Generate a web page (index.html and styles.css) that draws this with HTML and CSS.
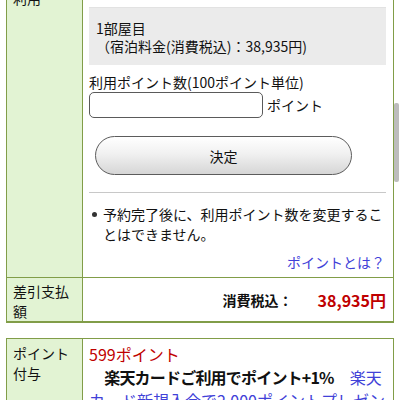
FILE: index.html
```html
<!DOCTYPE html>
<html lang="ja">
<head>
<meta charset="utf-8">
<link rel="stylesheet" href="styles.css">
</head>
<body>
<div class="page">
  <div class="tbl tbl1">
    <div class="th">ポイント利用</div>
    <div class="td use">
      <div class="room">
        <div>1部屋目</div>
        <div>（宿泊料金(消費税込)：38,935円)</div>
      </div>
      <div class="label">利用ポイント数(100ポイント単位)</div>
      <div class="inrow">
        <input class="pts" type="text">
        <span>ポイント</span>
      </div>
      <button class="btn" type="button">決定</button>
      <hr class="sep">
      <ul class="notes">
        <li><span class="dot"></span><span>予約完了後に、利用ポイント数を変更することはできません。</span></li>
      </ul>
      <div class="more"><a href="#">ポイントとは？</a></div>
    </div>
    <div class="th last">差引支払額</div>
    <div class="td last total">
      <span class="tax">消費税込：</span>
      <span class="price">38,935円</span>
    </div>
  </div>

  <div class="tbl tbl2">
    <div class="th">ポイント付与</div>
    <div class="td give">
      <div class="red">599ポイント</div>
      <div class="card"><b>　楽天カードご利用でポイント+1%</b>　<a href="#">楽天カード新規入会で2,000ポイントプレゼント</a></div>
    </div>
  </div>
</div>
<div class="scroll"></div>
</body>
</html>
```

FILE: styles.css
```css
html, body {
  margin: 0;
  padding: 0;
  background: #fff;
}
body {
  font-family: "Noto Sans CJK JP", "Noto Sans", sans-serif;
  font-size: 14px;
  color: #111;
  overflow: hidden;
}
.page {
  padding: 0 6px;
}
.tbl {
  display: grid;
  grid-template-columns: 76px 1fr;
  border: 1px solid #819d48;
}
.tbl1 {
  margin-top: -38px;
  border-bottom-width: 2px;
}
.tbl2 {
  margin-top: 15px;
}
.th {
  background: #e2f3d3;
  border-right: 1px solid #819d48;
  border-bottom: 1px solid #819d48;
  padding: 5px 6px 0;
  line-height: 20px;
}
.td {
  border-bottom: 1px solid #819d48;
  padding: 0 7px 0 6px;
}
.th.last, .td.last, .tbl2 .th, .tbl2 .td {
  border-bottom: none;
}
.tbl1 .th.last {
  padding-top: 3px;
}
.use {
  padding-top: 44px;
  padding-bottom: 5px;
}
.room {
  background: #ebebeb;
  border-top: 1px solid #e2e2e2;
  padding: 11px 7px 10px;
  line-height: 18px;
}
.label {
  margin-top: 8px;
  line-height: 18px;
}
.inrow {
  margin-top: 1px;
  display: flex;
  align-items: center;
  gap: 4px;
}
.pts {
  width: 174px;
  height: 26px;
  box-sizing: border-box;
  border: 1px solid #5a5a5a;
  border-radius: 5px;
  margin: 0;
  padding: 0 4px;
  background: #fff;
}
.inrow span {
  line-height: 18px;
}
.btn {
  display: block;
  margin: 18px 0 0 6px;
  width: 257px;
  height: 39px;
  box-sizing: border-box;
  border: 1px solid #5c5c5c;
  border-radius: 20px;
  background: linear-gradient(#ffffff 0%, #f1f1f1 45%, #d6d6d6 100%);
  font-family: inherit;
  font-size: 14px;
  color: #111;
  padding: 0;
}
.sep {
  margin: 17px 0 0;
  border: none;
  border-top: 1px solid #c8c8c8;
  height: 0;
}
.notes {
  list-style: none;
  margin: 11px 0 0;
  padding: 0;
  line-height: 20px;
}
.notes li {
  display: flex;
}
.dot {
  flex: none;
  width: 5px;
  height: 5px;
  border-radius: 50%;
  background: #333;
  margin: 8px 6px 0 3px;
}
.more {
  margin-top: 8px;
  text-align: right;
  line-height: 20px;
  padding-right: 1px;
}
a {
  color: #4141d8;
  text-decoration: none;
}
.total {
  display: flex;
  justify-content: flex-end;
  align-items: center;
  gap: 25px;
  padding-right: 7px;
}
.tax {
  font-weight: bold;
}
.price {
  font-weight: bold;
  font-size: 16px;
  color: #bf0000;
}
.tbl2 .th {
  padding-top: 4px;
}
.give {
  padding-top: 4px;
  font-size: 16px;
  line-height: 23px;
}
.red {
  color: #bf0000;
}
.card b {
  font-weight: bold;
  letter-spacing: -0.8px;
}
.scroll {
  position: fixed;
  right: 1px;
  top: 103px;
  width: 5px;
  height: 79px;
  background: #bdbdbd;
  border-radius: 2px;
}
```
